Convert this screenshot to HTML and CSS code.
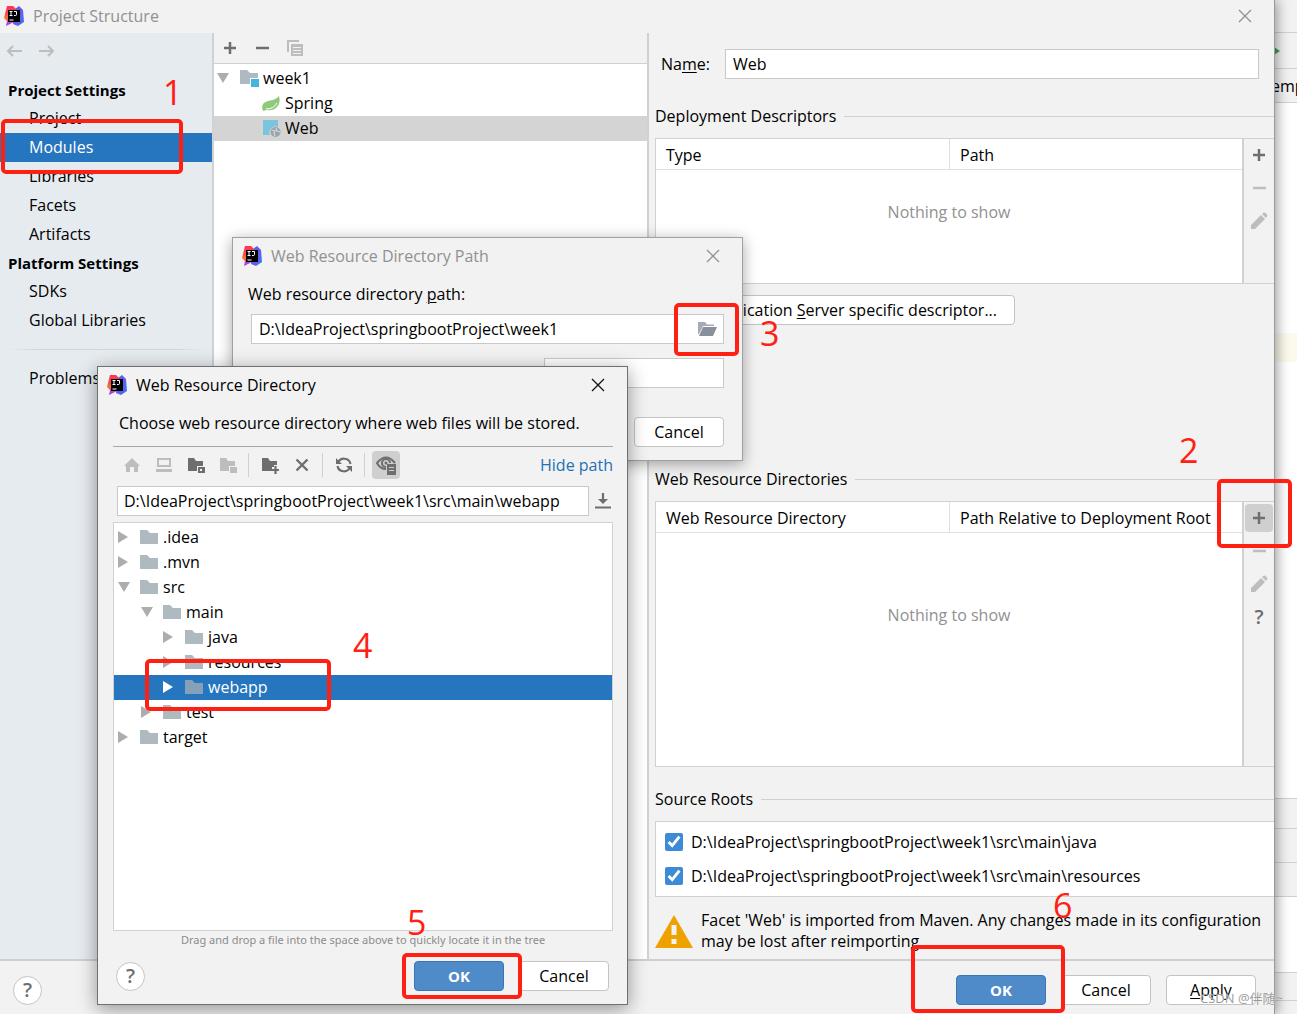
FILE: index.html
```html
<!DOCTYPE html>
<html lang="en">
<head>
<meta charset="utf-8">
<title>Project Structure</title>
<link rel="stylesheet" href="styles.css">
</head>
<body>
<svg class="sprite" aria-hidden="true">
  <defs>
    <linearGradient id="gl" x1="0" y1="0" x2="0" y2="1"><stop offset="0" stop-color="#fe315d"/><stop offset=".4" stop-color="#fb4a4a"/><stop offset=".6" stop-color="#f97a1f"/><stop offset=".8" stop-color="#c840d8"/><stop offset="1" stop-color="#8a3ff0"/></linearGradient>
    <linearGradient id="gr" x1="0" y1="0" x2="1" y2="1"><stop offset="0" stop-color="#3a6cf0"/><stop offset=".5" stop-color="#6b57e8"/><stop offset="1" stop-color="#2f7df6"/></linearGradient>
  </defs>
  <symbol id="idea" viewBox="0 0 20 20">
    <path d="M11 3l4-3 4 4 1 12-6 4-5-2z" fill="url(#gr)"/>
    <path d="M3 0h6l4 4-3 12-8 4 1-5-3-3 1-4z" fill="url(#gl)"/>
    <path d="M4 4h12v12H4z" fill="#000"/>
    <path d="M5.500 5.500h3M7 5.500v4M5.500 9.500h3M10 5.500h2.500v3q0 1-1 1H10M5.500 14h4" stroke="#fff" stroke-width="1" fill="none"/>
  </symbol>
  <symbol id="close" viewBox="0 0 14 14"><path d="M1 1l12 12M13 1L1 13" stroke="currentColor" stroke-width="1.300"/></symbol>
  <symbol id="plus" viewBox="0 0 14 14"><path d="M7 1v12M1 7h12" stroke="currentColor" stroke-width="2.500"/></symbol>
  <symbol id="minus" viewBox="0 0 14 14"><path d="M1 7h13" stroke="currentColor" stroke-width="2.500"/></symbol>
  <symbol id="pencil" viewBox="0 0 18 18"><path d="M1 17v-4L11 3l4 4L5 17zM12 2l1.500-1.300q1-.6 2 .3l1.500 1.500q.9 1 0 2L16 6z" fill="currentColor"/></symbol>
  <symbol id="folder" viewBox="0 0 18 14"><path d="M0 0h7l3 3h8v11H0z" fill="currentColor"/></symbol>
  <symbol id="down" viewBox="0 0 12 10"><path d="M0 0h12L6 10z" fill="currentColor"/></symbol>
  <symbol id="right" viewBox="0 0 12 12"><path d="M0 0l10 6-10 6z" fill="currentColor"/></symbol>
  <symbol id="arrow" viewBox="0 0 16 12"><path d="M16 6H1.500M7 1L2 6l5 5" stroke="currentColor" stroke-width="2" fill="none"/></symbol>
</svg>

<div class="desktop">
  <div class="ide">
    <div class="ide-bar ide-title"></div>
    <div class="ide-bar ide-tools"><svg class="run" viewBox="0 0 6 8"><path d="M0 0l6 4-6 4z" fill="#499c54"/></svg></div>
    <div class="ide-bar ide-tabs">emp</div>
    <div class="ide-editor"><div class="caret-line"></div></div>
    <div class="ide-bar ide-low-a"></div>
    <div class="ide-bar ide-low-b"></div>
    <div class="ide-bar ide-low-b"></div>
    <div class="ide-console"></div>
    <div class="ide-bar ide-low-c"></div>
    <div class="ide-foot"></div>
  </div>

  <main class="structure">
    <header class="titlebar inactive">
      <svg class="i20"><use href="#idea"/></svg><h1>Project Structure</h1>
      <button class="plain close" aria-label="Close"><svg class="i14"><use href="#close"/></svg></button>
    </header>
    <div class="columns">
      <nav class="sidebar">
        <div class="history">
          <button class="plain" aria-label="Back"><svg class="arrow"><use href="#arrow"/></svg></button>
          <button class="plain" aria-label="Forward"><svg class="arrow flip"><use href="#arrow"/></svg></button>
        </div>
        <h2>Project Settings</h2>
        <a href="#">Project</a>
        <a href="#" class="current">Modules</a>
        <a href="#">Libraries</a>
        <a href="#">Facets</a>
        <a href="#">Artifacts</a>
        <h2>Platform Settings</h2>
        <a href="#">SDKs</a>
        <a href="#">Global Libraries</a>
        <hr>
        <a href="#">Problems</a>
      </nav>

      <section class="modules">
        <div class="module-tools">
          <button class="plain dark" aria-label="Add"><svg class="i14"><use href="#plus"/></svg></button>
          <button class="plain dark" aria-label="Remove"><svg class="i14"><use href="#minus"/></svg></button>
          <button class="plain" aria-label="Copy"><svg class="i16" viewBox="0 0 16 16"><path d="M1 12V1h11" stroke="currentColor" stroke-width="2" fill="none"/><path d="M4 4h12v12H4zM6 7v1h8V7zM6 10v1h8v-1zM6 13v1h8v-1z" fill="currentColor" fill-rule="evenodd"/></svg></button>
        </div>
        <ul class="tree module-tree">
          <li><svg class="twist"><use href="#down"/></svg><svg class="mod" viewBox="0 0 19 18"><path d="M0 1h7l3 3h8v5h-8v6H0z" fill="#afb9c0"/><path d="M11 10h8v8h-8z" fill="#40b6e0"/></svg>week1</li>
          <li class="leaf"><svg class="mod" viewBox="0 0 19 18"><path d="M17 2q2 7-2 11-4 4-10 3l-4 1Q-2 9 6 7q8-1 11-5z" fill="#8fc97b"/><path d="M4 15q8 0 11-6" stroke="#fff" fill="none"/></svg>Spring</li>
          <li class="leaf picked"><svg class="mod" viewBox="0 0 19 18"><path d="M1 1h15v7a6 6 0 0 0-8 8H1z" fill="#7ac4de"/><circle cx="13.500" cy="13" r="5" fill="#98a5af"/><path d="M10 11l3 1-1 2 1 3M14 9l1 3 3 1" stroke="#d4d4d4" stroke-width="1.300" fill="none"/></svg>Web</li>
        </ul>
      </section>

      <section class="detail">
        <div class="name-row"><label for="name">Na<u>m</u>e:</label><input id="name" class="field" value="Web"></div>
        <h2 class="group">Deployment Descriptors</h2>
        <div class="panel descriptors">
          <table><thead><tr><th>Type</th><th>Path</th></tr></thead><tbody><tr><td colspan="2">Nothing to show</td></tr></tbody></table>
          <div class="side-tools">
            <button class="plain dark" aria-label="Add"><svg class="i14"><use href="#plus"/></svg></button>
            <button class="plain" aria-label="Remove"><svg class="i14"><use href="#minus"/></svg></button>
            <button class="plain" aria-label="Edit"><svg class="i18"><use href="#pencil"/></svg></button>
          </div>
        </div>
        <button class="btn add-descriptor">Add Application <u>S</u>erver specific descriptor...</button>
        <h2 class="group resources-title">Web Resource Directories</h2>
        <div class="panel resources">
          <table><thead><tr><th>Web Resource Directory</th><th>Path Relative to Deployment Root</th></tr></thead><tbody><tr><td colspan="2">Nothing to show</td></tr></tbody></table>
          <div class="side-tools">
            <button class="plain dark pressed" aria-label="Add"><svg class="i14"><use href="#plus"/></svg></button>
            <button class="plain" aria-label="Remove"><svg class="i14"><use href="#minus"/></svg></button>
            <button class="plain" aria-label="Edit"><svg class="i18"><use href="#pencil"/></svg></button>
            <button class="plain dark q">?</button>
          </div>
        </div>
        <h2 class="group roots-title">Source Roots</h2>
        <div class="roots">
          <label><input type="checkbox" checked>D:\IdeaProject\springbootProject\week1\src\main\java</label>
          <label><input type="checkbox" checked>D:\IdeaProject\springbootProject\week1\src\main\resources</label>
        </div>
        <div class="warning">
          <svg viewBox="0 0 38 33"><path d="M19 0l19 33H0z" fill="#eda200"/><path d="M16.500 10h5v10h-5zM16.500 24h5v5h-5z" fill="#f2f2f2"/></svg>
          <p>Facet 'Web' is imported from Maven. Any changes made in its configuration may be lost after reimporting.</p>
        </div>
      </section>
    </div>
    <footer class="actions">
      <button class="help" aria-label="Help">?</button>
      <button class="btn primary">OK</button>
      <button class="btn">Cancel</button>
      <button class="btn"><u>A</u>pply</button>
    </footer>
  </main>

  <section class="dialog path-dialog">
    <header class="titlebar inactive">
      <svg class="i20"><use href="#idea"/></svg><h1>Web Resource Directory Path</h1>
      <button class="plain close" aria-label="Close"><svg class="i14"><use href="#close"/></svg></button>
    </header>
    <div class="path-body">
      <label for="dir">Web resource directory <u>p</u>ath:</label>
      <div class="field browse"><input id="dir" value="D:\IdeaProject\springbootProject\week1">
        <button class="plain" aria-label="Browse"><svg viewBox="0 0 19 15"><path d="M0 0h7l2 2.500h7V4H5L1 12H0z" fill="#a4abb2"/><path d="M5 5h14l-4 9H1z" fill="#87919b"/></svg></button></div>
      <input class="field relative-path" aria-label="Relative path">
      <button class="btn">Cancel</button>
    </div>
  </section>

  <section class="dialog chooser">
    <header class="titlebar">
      <svg class="i20"><use href="#idea"/></svg><h1>Web Resource Directory</h1>
      <button class="plain close" aria-label="Close"><svg class="i14"><use href="#close"/></svg></button>
    </header>
    <p class="prompt">Choose web resource directory where web files will be stored.</p>
    <div class="chooser-tools">
      <button class="plain" aria-label="Home"><svg class="i16" viewBox="0 0 16 16"><path d="M8 1l8 8h-2v6h-4v-5H6v5H2V9H0z" fill="currentColor"/></svg></button>
      <button class="plain" aria-label="Desktop"><svg class="i16" viewBox="0 0 16 16"><path d="M1 1h14v9H1zM3 3v5h10V3zM0 12h16v3H0z" fill="currentColor" fill-rule="evenodd"/></svg></button>
      <button class="plain dark" aria-label="Project directory"><svg class="i18" viewBox="0 0 18 18"><path d="M1 2h6l2 3h7v5h-6v5H1z" fill="currentColor"/><path d="M11 11h7v6h-7zM13 13v2h2v-2z" fill="currentColor" fill-rule="evenodd"/></svg></button>
      <button class="plain" aria-label="Module directory"><svg class="i18" viewBox="0 0 18 18"><path d="M1 2h6l2 3h7v5h-6v5H1zM11 11h7v6h-7z" fill="currentColor"/></svg></button>
      <i class="divider"></i>
      <button class="plain dark" aria-label="New folder"><svg class="i18" viewBox="0 0 18 18"><path d="M1 2h6l2 3h7v4h-3v2h-2v4H1z" fill="currentColor"/><path d="M14.500 10v8M10.500 14h8" stroke="currentColor" stroke-width="2.200"/></svg></button>
      <button class="plain dark" aria-label="Delete"><svg class="i14" viewBox="0 0 14 14"><path d="M1.500 1.500l11 11M12.500 1.500l-11 11" stroke="currentColor" stroke-width="2.400"/></svg></button>
      <i class="divider"></i>
      <button class="plain dark" aria-label="Refresh"><svg class="i18" viewBox="0 0 18 18"><path d="M3 7a6.500 6.500 0 0 1 12.500 1M15 11A6.500 6.500 0 0 1 2.500 10" stroke="currentColor" stroke-width="2.200" fill="none"/><path d="M1 2v6h6zM17 16v-6h-6z" fill="currentColor"/></svg></button>
      <i class="divider"></i>
      <button class="plain dark pressed" aria-label="Show hidden files"><svg class="i20" viewBox="0 0 20 20"><path d="M19 8Q10-3 1 8q3 6 9 6" stroke="currentColor" stroke-width="2" fill="none"/><path d="M10 12a4 4 0 1 1 4-4" stroke="currentColor" stroke-width="2" fill="none"/><circle cx="10" cy="8" r="1.500" fill="currentColor"/><path d="M11 9h9v11h-9zM13 12v1h5v-1zM13 15v1h5v-1z" fill="currentColor" fill-rule="evenodd"/></svg></button>
      <a href="#">Hide path</a>
    </div>
    <div class="path-row"><input class="field" aria-label="Path" value="D:\IdeaProject\springbootProject\week1\src\main\webapp">
      <button class="plain dark" aria-label="History"><svg class="i16" viewBox="0 0 16 16"><path d="M8 0v8M0 14.500h16" stroke="currentColor" stroke-width="2.200"/><path d="M3 6h10l-5 5z" fill="currentColor"/></svg></button></div>
    <ul class="tree files">
      <li><svg class="twist side"><use href="#right"/></svg><svg class="folder"><use href="#folder"/></svg>.idea</li>
      <li><svg class="twist side"><use href="#right"/></svg><svg class="folder"><use href="#folder"/></svg>.mvn</li>
      <li><svg class="twist"><use href="#down"/></svg><svg class="folder"><use href="#folder"/></svg>src</li>
      <li class="l2"><svg class="twist"><use href="#down"/></svg><svg class="folder"><use href="#folder"/></svg>main</li>
      <li class="l3"><svg class="twist side"><use href="#right"/></svg><svg class="folder"><use href="#folder"/></svg>java</li>
      <li class="l3"><svg class="twist side"><use href="#right"/></svg><svg class="folder"><use href="#folder"/></svg>resources</li>
      <li class="l3 active"><svg class="twist side"><use href="#right"/></svg><svg class="folder"><use href="#folder"/></svg>webapp</li>
      <li class="l2"><svg class="twist side"><use href="#right"/></svg><svg class="folder"><use href="#folder"/></svg>test</li>
      <li><svg class="twist side"><use href="#right"/></svg><svg class="folder"><use href="#folder"/></svg>target</li>
    </ul>
    <p class="hint">Drag and drop a file into the space above to quickly locate it in the tree</p>
    <footer>
      <button class="help" aria-label="Help">?</button>
      <button class="btn primary">OK</button>
      <button class="btn">Cancel</button>
    </footer>
  </section>

  <div class="mark m1"></div><span class="step s1">1</span>
  <div class="mark m2"></div><span class="step s2">2</span>
  <div class="mark m3"></div><span class="step s3">3</span>
  <div class="mark m4"></div><span class="step s4">4</span>
  <div class="mark m5"></div><span class="step s5">5</span>
  <div class="mark m6"></div><span class="step s6">6</span>
  <span class="watermark">CSDN @伴随~</span>
</div>
</body>
</html>
```
FILE: styles.css
```css
* { box-sizing: border-box; }
body { margin: 0; font: 16px/20px "Open Sans", "Noto Sans CJK SC", sans-serif; color: #000; background: #f2f2f2; }
h1, h2, p, ul { margin: 0; padding: 0; font-size: 16px; font-weight: 400; }
ul { list-style: none; }
button, input { font: inherit; color: inherit; }
svg { display: block; flex: none; }
u { text-underline-offset: 2px; text-decoration-thickness: 1px; }
.sprite { position: absolute; width: 0; height: 0; }
.i14 { width: 14px; height: 14px; }
.i16 { width: 16px; height: 16px; }
.i18 { width: 18px; height: 18px; }
.i20 { width: 20px; height: 20px; }

.desktop { position: relative; display: flex; min-height: 100vh; overflow: hidden; }

/* editor window behind the dialogs */
.ide { position: absolute; inset: 0; display: flex; flex-direction: column; align-items: stretch; background: #fff; }
.ide-bar { background: #f2f2f2; border-bottom: 1px solid #d1d1d1; display: flex; justify-content: flex-end; align-items: center; }
.ide-title { height: 33px; }
.ide-tools { height: 36px; padding-right: 17px; }
.run { width: 6px; height: 8px; }
.ide-tabs { height: 34px; padding-left: calc(100% - 26px); justify-content: flex-start; }
.ide-editor { flex: 1; padding-top: 230px; border-bottom: 1px solid #d1d1d1; }
.caret-line { height: 29px; background: #fcfaed; }
.ide-low-a { height: 30px; }
.ide-low-b { height: 34px; }
.ide-console { height: 76px; border-bottom: 1px solid #d1d1d1; }
.ide-low-c { height: 28px; }
.ide-foot { height: 13px; background: #f2f2f2; }

/* shared controls */
.plain { display: flex; align-items: center; justify-content: center; border: 0; padding: 0; background: none; color: #bdbdbd; }
.dark { color: #6e6e6e; }
.pressed { background: #cfcfcf; border-radius: 4px; }
.titlebar { display: flex; align-items: center; gap: 9px; }
.titlebar .close { margin-left: auto; color: #111; }
.titlebar.inactive, .titlebar.inactive .close { color: #919191; }
.btn { width: 90px; height: 30px; padding: 0; border: 1px solid #c4c4c4; border-radius: 4px; background: #fff; }
.btn.primary { background: #4f8ac9; border-color: #3b75b4; color: #fff; font-weight: 700; font-size: 15px; }
.help { width: 29px; height: 29px; padding: 0; margin-right: auto; border: 1px solid #c4c4c4; border-radius: 50%; background: #fff; color: #6e6e6e; font-size: 20px; font-weight: 600; line-height: 20px; }
.field { height: 30px; padding: 0 7px; border: 1px solid #c9c9c9; border-radius: 0; background: #fff; }

/* main window */
.structure { position: relative; display: flex; flex-direction: column; flex: 1; margin-right: 22px; background: #f2f2f2; border-right: 1px solid #9a9a9a; box-shadow: 2px 0 12px rgba(0,0,0,.4); }
.structure > .titlebar { height: 33px; padding: 0 22px 2px 4px; }
.columns { display: flex; flex: 1; border-bottom: 2px solid #cfcfcf; }
.sidebar { width: 214px; background: #e6ebf0; border-right: 2px solid #d1d1d1; }
.history { display: flex; gap: 17px; height: 36px; padding-left: 6px; margin-bottom: 7px; }
.arrow { width: 16px; height: 12px; }
.flip { transform: scaleX(-1); }
.sidebar h2 { padding-left: 8px; line-height: 28px; font-weight: 700; font-size: 15px; }
.sidebar a { display: block; padding-left: 29px; line-height: 29px; color: #000; text-decoration: none; }
.sidebar .current { background: #2675bf; color: #fff; }
.sidebar hr { height: 1px; margin: 14px 8px; border: 0; background: linear-gradient(90deg, transparent, #d1d5d9 15%, #d1d5d9 85%, transparent); }
.modules { display: flex; flex-direction: column; width: 435px; border-right: 2px solid #d1d1d1; background: #fff; }
.module-tools { display: flex; align-items: center; gap: 18px; height: 31px; padding-left: 9px; background: #f2f2f2; border-bottom: 1px solid #d1d1d1; }
.tree li { display: flex; align-items: center; height: 25px; padding-bottom: 2px; }
.twist { width: 12px; height: 10px; margin-right: 10px; color: #adadad; }
.side { height: 12px; }
.module-tree { padding-top: 2px; }
.module-tree li { padding-left: 3px; }
.module-tree li svg + svg { margin-left: 1px; }
.module-tree .leaf { padding-left: 48px; }
.mod { width: 19px; height: 18px; margin-right: 4px; }
.picked { background: #d4d4d4; }

.detail { display: flex; flex-direction: column; flex: 1; padding: 16px 0 0 6px; min-width: 0; }
.name-row { display: flex; align-items: center; padding: 0 15px 0 6px; margin-bottom: 25px; }
.name-row label { width: 64px; }
.name-row .field { flex: 1; }
.group { display: flex; align-items: center; gap: 8px; height: 24px; margin-bottom: 10px; }
.group::after { content: ""; flex: 1; height: 1px; background: #d1d1d1; }
.panel { display: flex; border: solid #d1d1d1; border-width: 1px 0 1px 1px; }
.panel table { flex: 1; width: 100%; border-collapse: separate; border-spacing: 0; table-layout: fixed; background: #fff; }
.panel th { height: 31px; width: 50%; padding: 2px 10px 0; font-weight: 400; text-align: left; border-bottom: 1px solid #e0e0e0; }
.panel th + th { border-left: 1px solid #e0e0e0; }
.panel td { padding: 32px 0 0; text-align: center; vertical-align: top; color: #919191; }
.descriptors { height: 146px; }
.side-tools { width: 32px; border-left: 2px solid #d1d1d1; display: flex; flex-direction: column; align-items: center; padding-top: 2px; gap: 5px; }
.side-tools button { width: 28px; height: 28px; }
.side-tools .q { font-size: 20px; font-weight: 600; }
.add-descriptor { width: 360px; padding-right: 17px; margin-top: 11px; text-align: right; }
.resources-title { margin-top: 142px; }
.resources { flex: 1; }
.resources td { padding-top: 72px; }
.roots-title { margin-top: 20px; }
.roots { display: flex; flex-direction: column; gap: 4px; padding: 5px 9px; background: #fff; border: solid #d1d1d1; border-width: 1px 0 1px 1px; }
.roots label { display: flex; align-items: center; gap: 8px; height: 30px; }
.roots input { width: 18px; height: 18px; margin: 0; accent-color: #3d8ad6; }
.warning { display: flex; align-items: center; gap: 8px; height: 62px; padding: 6px 6px 0 0; }
.warning svg { width: 38px; height: 33px; }
.warning p { line-height: 21px; }
.actions { display: flex; align-items: center; gap: 15px; height: 53px; padding: 5px 18px 0 13px; }

/* floating dialogs */
.dialog { position: absolute; display: flex; flex-direction: column; background: #f2f2f2; border: 1px solid #a0a0a0; box-shadow: 0 3px 14px rgba(0,0,0,.35); }
.dialog .titlebar { height: 36px; padding: 0 22px 0 9px; flex: none; }
.path-dialog { left: 232px; top: 237px; width: 511px; }
.path-body { display: flex; flex-direction: column; align-items: flex-end; padding: 10px 18px 13px 15px; }
.path-body label { align-self: stretch; margin-bottom: 10px; }
.browse { display: flex; align-items: center; width: 473px; padding-right: 6px; margin-bottom: 14px; }
.browse input { flex: 1; min-width: 0; padding: 0; border: 0; }
.browse svg { width: 19px; height: 15px; }
.relative-path { width: 180px; margin-bottom: 29px; }

.chooser { left: 97px; top: 366px; width: 531px; height: 639px; border-color: #707070; box-shadow: 0 4px 18px rgba(0,0,0,.4); padding: 0 14px 0 15px; }
.chooser .titlebar { margin: 0 -14px 0 -15px; }
.prompt { padding: 10px 6px 13px; border-bottom: 1px solid #a8a8a8; }
.chooser-tools { display: flex; align-items: center; height: 36px; gap: 4px; padding-left: 5px; }
.chooser-tools button { width: 28px; height: 28px; }
.chooser-tools a { margin-left: auto; color: #2470b3; text-decoration: none; }
.divider { width: 1px; height: 24px; background: #d1d1d1; margin: 0 3px 0 2px; }
.path-row { display: flex; gap: 6px; padding: 3px 2px 6px 4px; }
.path-row .field { flex: 1; min-width: 0; padding-left: 6px; }
.files { flex: 1; background: #fff; border: 1px solid #d1d1d1; padding-top: 2px; }
.files li { padding-left: 4px; }
.files .l2 { padding-left: 27px; }
.files .l3 { padding-left: 49px; }
.folder { width: 18px; height: 14px; margin-right: 5px; color: #afb9c0; }
.active { background: #2675bf; color: #fff; }
.active .twist { color: #fff; }
.active .folder { color: #86a0b8; }
.hint { font-family: "Noto Sans", sans-serif; font-size: 11px; line-height: 18px; text-align: center; color: #8c8c8c; }
.chooser footer { display: flex; align-items: center; gap: 15px; padding: 12px 4px 13px 3px; }

/* tutorial annotations */
.mark { position: absolute; border: 4px solid #ff2014; border-radius: 5px; }
.step { position: absolute; color: #ff2014; font-size: 34px; line-height: 36px; }
.m1 { left: 1px; top: 119px; width: 182px; height: 55px; }
.m2 { left: 1217px; top: 479px; width: 75px; height: 69px; }
.m3 { left: 674px; top: 303px; width: 65px; height: 53px; }
.m4 { left: 145px; top: 659px; width: 186px; height: 52px; }
.m5 { left: 402px; top: 953px; width: 120px; height: 46px; }
.m6 { left: 911px; top: 945px; width: 154px; height: 68px; }
.s1 { left: 163px; top: 74px; }
.s2 { left: 1179px; top: 432px; }
.s3 { left: 760px; top: 315px; }
.s4 { left: 353px; top: 627px; }
.s5 { left: 407px; top: 904px; }
.s6 { left: 1053px; top: 887px; }
.watermark { position: absolute; left: 1200px; top: 988px; font-size: 13px; color: #9b9b9b; text-shadow: 0 0 1px #fff; }
```
